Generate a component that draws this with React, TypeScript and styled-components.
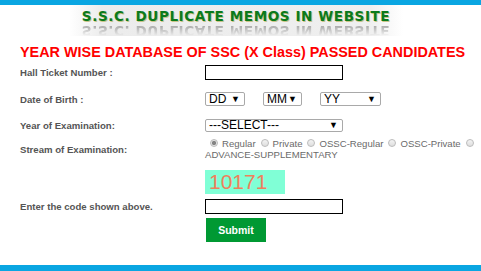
import React from 'react';
import styled, { createGlobalStyle } from 'styled-components';

const GlobalStyle = createGlobalStyle`
  html, body {
    margin: 0;
    padding: 0;
    background: #ffffff;
    font-family: "Liberation Sans", Arial, sans-serif;
  }
`;

const Page = styled.div`
  width: 481px;
  height: 271px;
  display: flex;
  flex-direction: column;
  overflow: hidden;
`;

const Bar = styled.div<{ $h: number }>`
  height: ${(p) => p.$h}px;
  flex-shrink: 0;
  background: #0aa6e2;
`;

const Banner = styled.div`
  margin-left: 69px;
  width: 334px;
  height: 31px;
  flex-shrink: 0;
  display: flex;
  flex-direction: column;
  align-items: center;
  overflow: hidden;
  padding-top: 5px;
  box-sizing: border-box;
  background: linear-gradient(
    to right,
    #ffffff 0%,
    #ececec 10%,
    #efefef 90%,
    #ffffff 100%
  );
`;

const BannerTitle = styled.div`
  font-family: "DejaVu Sans", Verdana, sans-serif;
  font-size: 13.6px;
  font-weight: bold;
  letter-spacing: 0.55px;
  line-height: 13px;
  color: #0b7a1c;
  text-shadow: 1px 1px 0 #c9c48a;
  white-space: nowrap;
`;

const BannerMirror = styled(BannerTitle)`
  margin-top: 1px;
  color: #9a9a9a;
  text-shadow: none;
  transform: scaleY(-1);
  opacity: 0.75;
  -webkit-mask-image: linear-gradient(to top, #000 20%, transparent 90%);
`;

const Heading = styled.h1`
  margin: 8px 0 0 20px;
  font-size: 14.4px;
  font-weight: bold;
  line-height: 16px;
  color: #ff0000;
  white-space: nowrap;
`;

const Form = styled.div`
  display: grid;
  grid-template-columns: 185px 1fr;
  padding-left: 20px;
  margin-top: 3px;
`;

const Label = styled.div<{ $h: number }>`
  height: ${(p) => p.$h}px;
  display: flex;
  align-items: center;
  font-size: 9.6px;
  font-weight: bold;
  color: #555555;
  white-space: nowrap;
`;

const Field = styled.div<{ $h: number }>`
  height: ${(p) => p.$h}px;
  display: flex;
  align-items: center;
  gap: 18px;
`;

const TextInput = styled.input`
  box-sizing: border-box;
  width: 138px;
  height: 15px;
  margin: 0;
  padding: 0 2px;
  border: 1.5px solid #000;
  outline: none;
`;

const Select = styled.div<{ $w: number; $h?: number }>`
  box-sizing: border-box;
  width: ${(p) => p.$w}px;
  height: ${(p) => p.$h ?? 14}px;
  padding: 0 4px 0 3px;
  display: flex;
  align-items: center;
  justify-content: space-between;
  border: 1px solid #a9a9a9;
  border-radius: 2px;
  font-size: 12px;
  color: #000;
  background: #fff;
`;

const Arrow = styled.span`
  font-size: 9px;
  line-height: 1;
`;

const RadioGroup = styled.div`
  width: 274px;
  font-size: 9.6px;
  line-height: 11.5px;
  color: #6a6a6a;
`;

const Radio = styled.span<{ $on?: boolean }>`
  display: inline-block;
  box-sizing: border-box;
  width: 8px;
  height: 8px;
  margin: 0 4px 0 5px;
  border-radius: 50%;
  vertical-align: -0.5px;
  border: 1px solid #bcbcbc;
  background: ${(p) =>
    p.$on
      ? 'radial-gradient(circle, #858585 0 1.8px, #e4e4e4 2.4px)'
      : 'linear-gradient(#f4f4f4, #dedede)'};
`;

const Captcha = styled.div`
  width: 80px;
  height: 24px;
  display: flex;
  align-items: center;
  padding-left: 4px;
  box-sizing: border-box;
  background: #80ffd6;
  color: #f0805c;
  font-size: 21px;
`;

const Submit = styled.button`
  width: 60px;
  height: 24px;
  margin-left: 1px;
  border: none;
  background: #009933;
  color: #fff;
  font-family: "Liberation Sans", Arial, sans-serif;
  font-weight: bold;
  font-size: 10.5px;
  padding: 0;
`;

const Spacer = styled.div`
  flex: 1;
`;

const TITLE = 'S.S.C. DUPLICATE MEMOS IN WEBSITE';

function App() {
  return (
    <Page>
      <GlobalStyle />
      <Bar $h={5} />
      <Banner>
        <BannerTitle>{TITLE}</BannerTitle>
        <BannerMirror aria-hidden>{TITLE}</BannerMirror>
      </Banner>
      <Heading>YEAR WISE DATABASE OF SSC (X Class) PASSED CANDIDATES</Heading>
      <Form>
        <Label $h={18}>Hall Ticket Number :</Label>
        <Field $h={18}>
          <TextInput type="text" />
        </Field>

        <Label $h={36}>Date of Birth :</Label>
        <Field $h={36}>
          <Select $w={40}>
            DD <Arrow>▼</Arrow>
          </Select>
          <Select $w={39}>
            MM <Arrow>▼</Arrow>
          </Select>
          <Select $w={61}>
            YY <Arrow>▼</Arrow>
          </Select>
        </Field>

        <Label $h={16}>Year of Examination:</Label>
        <Field $h={16}>
          <Select $w={138} $h={13}>
            ---SELECT--- <Arrow>▼</Arrow>
          </Select>
        </Field>

        <Label $h={32}>Stream of Examination:</Label>
        <Field $h={32}>
          <RadioGroup>
            <Radio $on />Regular
            <Radio />Private
            <Radio />OSSC-Regular
            <Radio />OSSC-Private
            <Radio />
            <br />
            ADVANCE-SUPPLEMENTARY
          </RadioGroup>
        </Field>

        <div />
        <Field $h={33}>
          <Captcha>10171</Captcha>
        </Field>

        <Label $h={16}>Enter the code shown above.</Label>
        <Field $h={16}>
          <TextInput type="text" />
        </Field>

        <div />
        <Field $h={32}>
          <Submit>Submit</Submit>
        </Field>
      </Form>
      <Spacer />
      <Bar $h={6} />
    </Page>
  );
}

export default App;
